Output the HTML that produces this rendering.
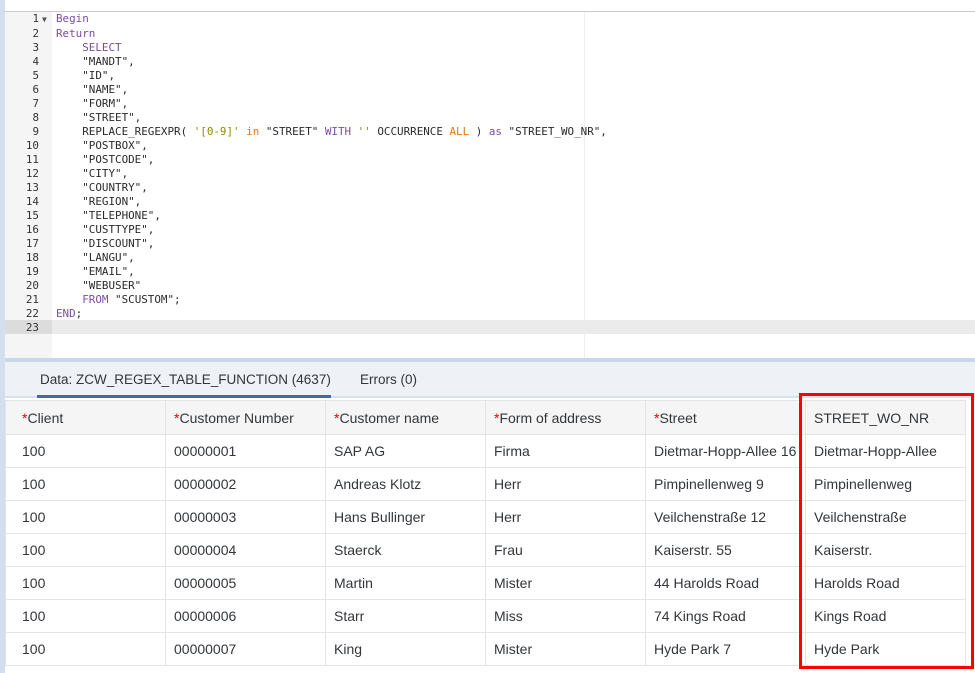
<!DOCTYPE html><html><head><style>
*{margin:0;padding:0;box-sizing:border-box}
html,body{width:975px;height:673px;overflow:hidden}
body{background:#fff;position:relative;font-family:"Liberation Sans",sans-serif}
.strip{position:absolute;left:0;top:0;width:5px;height:673px;background:#d3dfec}
.topline{position:absolute;left:5px;top:11px;right:0;height:1px;background:#ccc}
.gutter{position:absolute;left:5px;top:12px;width:47px;height:346px;background:#f5f5f5}
.hl{position:absolute;left:5px;top:320px;right:0;height:14px;background:#ebebeb}
.hlg{position:absolute;left:5px;top:320px;width:47px;height:14px;background:#dcdcdc}
.margin{position:absolute;left:584px;top:12px;width:1px;height:346px;background:#eee}
.code{position:absolute;left:5px;top:12px;font-family:"DejaVu Sans Mono",monospace;font-size:10.9px;line-height:14px;color:#2a2a2a;white-space:pre}
.ln{display:inline-block;width:34px;text-align:right;color:#333}
.ar{display:inline-block;width:17px;font-size:8px;color:#555;padding-left:3px}
.k{color:#7a4ca0}.s{color:#8a8a00}.o{color:#e8790f}
.bar{position:absolute;left:5px;top:358px;right:0;height:4px;background:#c9d8e8}
.tabs{position:absolute;left:5px;top:362px;right:0;height:36px;background:#eef2f6;border-bottom:2px solid #d6e2ee}
.tab{position:absolute;top:10px;font-size:13.5px;color:#32363a}
.ul{position:absolute;left:37px;top:395px;width:294px;height:3px;background:#3d6e9c}
table{position:absolute;left:5px;top:400px;border-collapse:collapse;font-size:14px;color:#32363a;table-layout:fixed}
td{width:160px;height:33px;border:1px solid #e4e4e4;padding-left:8px;vertical-align:middle;white-space:nowrap;overflow:hidden}
td:first-child{padding-left:16px}
tr.h td{background:#f5f5f5;height:34px}
.r{color:#e00}
.box{position:absolute;left:799px;top:393px;width:175px;height:276px;border:3px solid #f00}
</style></head><body>
<div class="strip"></div><div class="topline"></div><div class="gutter"></div><div class="margin"></div>
<div class="hl"></div><div class="hlg"></div>
<div class="code"><span class="ln">1</span><span class="ar">▼</span><span class="k">Begin</span>
<span class="ln">2</span><span class="ar"></span><span class="k">Return</span>
<span class="ln">3</span><span class="ar"></span>    <span class="k">SELECT</span>
<span class="ln">4</span><span class="ar"></span>    "MANDT",
<span class="ln">5</span><span class="ar"></span>    "ID",
<span class="ln">6</span><span class="ar"></span>    "NAME",
<span class="ln">7</span><span class="ar"></span>    "FORM",
<span class="ln">8</span><span class="ar"></span>    "STREET",
<span class="ln">9</span><span class="ar"></span>    REPLACE_REGEXPR( <span class="s">'[0-9]'</span> <span class="o">in</span> "STREET" <span class="k">WITH</span> <span class="s">''</span> OCCURRENCE <span class="o">ALL</span> ) <span class="k">as</span> "STREET_WO_NR",
<span class="ln">10</span><span class="ar"></span>    "POSTBOX",
<span class="ln">11</span><span class="ar"></span>    "POSTCODE",
<span class="ln">12</span><span class="ar"></span>    "CITY",
<span class="ln">13</span><span class="ar"></span>    "COUNTRY",
<span class="ln">14</span><span class="ar"></span>    "REGION",
<span class="ln">15</span><span class="ar"></span>    "TELEPHONE",
<span class="ln">16</span><span class="ar"></span>    "CUSTTYPE",
<span class="ln">17</span><span class="ar"></span>    "DISCOUNT",
<span class="ln">18</span><span class="ar"></span>    "LANGU",
<span class="ln">19</span><span class="ar"></span>    "EMAIL",
<span class="ln">20</span><span class="ar"></span>    "WEBUSER"
<span class="ln">21</span><span class="ar"></span>    <span class="k">FROM</span> "SCUSTOM";
<span class="ln">22</span><span class="ar"></span><span class="k">END</span>;
<span class="ln">23</span><span class="ar"></span></div>
<div class="bar"></div>
<div class="tabs"><span class="tab" style="left:35px">Data: ZCW_REGEX_TABLE_FUNCTION (4637)</span><span class="tab" style="left:355px">Errors (0)</span></div>
<div class="ul"></div>
<table>
<tr class="h"><td><span class="r">*</span>Client</td><td><span class="r">*</span>Customer Number</td><td><span class="r">*</span>Customer name</td><td><span class="r">*</span>Form of address</td><td><span class="r">*</span>Street</td><td>STREET_WO_NR</td></tr>
<tr><td>100</td><td>00000001</td><td>SAP AG</td><td>Firma</td><td>Dietmar-Hopp-Allee 16</td><td>Dietmar-Hopp-Allee</td></tr>
<tr><td>100</td><td>00000002</td><td>Andreas Klotz</td><td>Herr</td><td>Pimpinellenweg 9</td><td>Pimpinellenweg</td></tr>
<tr><td>100</td><td>00000003</td><td>Hans Bullinger</td><td>Herr</td><td>Veilchenstraße 12</td><td>Veilchenstraße</td></tr>
<tr><td>100</td><td>00000004</td><td>Staerck</td><td>Frau</td><td>Kaiserstr. 55</td><td>Kaiserstr.</td></tr>
<tr><td>100</td><td>00000005</td><td>Martin</td><td>Mister</td><td>44 Harolds Road</td><td>Harolds Road</td></tr>
<tr><td>100</td><td>00000006</td><td>Starr</td><td>Miss</td><td>74 Kings Road</td><td>Kings Road</td></tr>
<tr><td>100</td><td>00000007</td><td>King</td><td>Mister</td><td>Hyde Park 7</td><td>Hyde Park</td></tr>
</table>
<div class="box"></div>
</body></html>
